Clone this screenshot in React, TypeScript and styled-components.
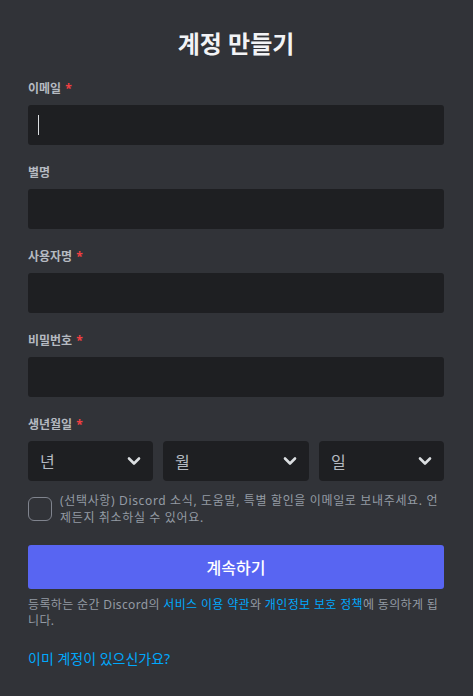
import React from 'react'
import styled, { createGlobalStyle } from 'styled-components'

const GlobalStyle = createGlobalStyle`
	body {
		margin: 0;
		background: #313338;
		font-family: 'Noto Sans', 'Noto Sans CJK KR', sans-serif;
	}
`

const Page = styled.div`
	padding: 29px 29px 24px 28px;
	box-sizing: border-box;
	width: 473px;
	min-height: 696px;
	background: #313338;
`

const Title = styled.h1`
	margin: 0 0 22px;
	text-align: center;
	color: #f2f3f5;
	font-size: 24px;
	line-height: 30px;
	font-weight: 700;
`

const Field = styled.div`
	margin-bottom: 20px;
`

const Label = styled.label`
	display: flex;
	height: 16px;
	align-items: center;
	margin-bottom: 8px;
	color: #b5bac1;
	font-size: 12px;
	line-height: 16px;
	font-weight: 700;
`

const Required = styled.span`
	color: #f23f42;
	padding-left: 4px;
`

const InputBox = styled.div`
	position: relative;
`

const TextInput = styled.input`
	display: block;
	width: 100%;
	height: 40px;
	box-sizing: border-box;
	padding: 10px;
	border: none;
	border-radius: 3px;
	background: #1e1f22;
	color: #dbdee1;
	font-size: 16px;
	outline: none;
`

const Caret = styled.span`
	position: absolute;
	left: 10px;
	top: 10px;
	width: 1px;
	height: 20px;
	background: #dbdee1;
`

const SelectRow = styled.div`
	display: grid;
	grid-template-columns: 125fr 146fr 125fr;
	gap: 10px;
`

const Select = styled.div`
	display: flex;
	align-items: center;
	justify-content: space-between;
	height: 40px;
	padding: 0 12px 0 12px;
	border-radius: 4px;
	background: #1e1f22;
	color: #b5bac1;
	font-size: 16px;
`

const CheckRow = styled.div`
	display: flex;
	align-items: flex-start;
	gap: 8px;
	margin-top: 11px;
`

const Checkbox = styled.span`
	flex: none;
	width: 24px;
	height: 24px;
	box-sizing: border-box;
	margin-top: 5px;
	border: 1px solid #80848e;
	border-radius: 6px;
`

const CheckText = styled.div`
	color: #949ba4;
	font-size: 12px;
	line-height: 17px;
	letter-spacing: 0.65px;
`

const Button = styled.button`
	display: block;
	width: 100%;
	height: 44px;
	margin-top: 19px;
	border: none;
	border-radius: 3px;
	background: #5865f2;
	color: #ffffff;
	font-family: inherit;
	font-size: 16px;
	font-weight: 500;
`

const Terms = styled.div`
	margin-top: 8px;
	color: #949ba4;
	font-size: 12px;
	line-height: 16px;
	letter-spacing: 0.35px;
`

const Link = styled.a`
	color: #00a8fc;
	text-decoration: none;
`

const LoginLink = styled(Link)`
	display: block;
	width: fit-content;
	margin-top: 21px;
	font-size: 14px;
	line-height: 18px;
`

const Chevron = () => (
	<svg width="14" height="10" viewBox="0 0 14 10">
		<path d="M2 2.5 L7 7.5 L12 2.5" fill="none" stroke="#dbdee1" strokeWidth="2.6" strokeLinecap="round" strokeLinejoin="round" />
	</svg>
)

const fields = [
	{ label: '이메일', required: true, caret: true },
	{ label: '별명', required: false },
	{ label: '사용자명', required: true },
	{ label: '비밀번호', required: true },
]

export default function App() {
	return (
		<Page>
			<GlobalStyle />
			<Title>계정 만들기</Title>
			{fields.map((f) => (
				<Field key={f.label}>
					<Label>
						{f.label}
						{f.required && <Required>*</Required>}
					</Label>
					<InputBox>
						<TextInput type={f.label === '비밀번호' ? 'password' : 'text'} />
						{f.caret && <Caret />}
					</InputBox>
				</Field>
			))}
			<Label>
				생년월일<Required>*</Required>
			</Label>
			<SelectRow>
				{['년', '월', '일'].map((s) => (
					<Select key={s}>
						{s}
						<Chevron />
					</Select>
				))}
			</SelectRow>
			<CheckRow>
				<Checkbox />
				<CheckText>
					(선택사항) Discord 소식, 도움말, 특별 할인을 이메일로 보내주세요. 언제든지 취소하실 수 있어요.
				</CheckText>
			</CheckRow>
			<Button>계속하기</Button>
			<Terms>
				등록하는 순간 Discord의 <Link>서비스 이용 약관</Link>와 <Link>개인정보 보호 정책</Link>에 동의하게 됩니다.
			</Terms>
			<LoginLink>이미 계정이 있으신가요?</LoginLink>
		</Page>
	)
}
